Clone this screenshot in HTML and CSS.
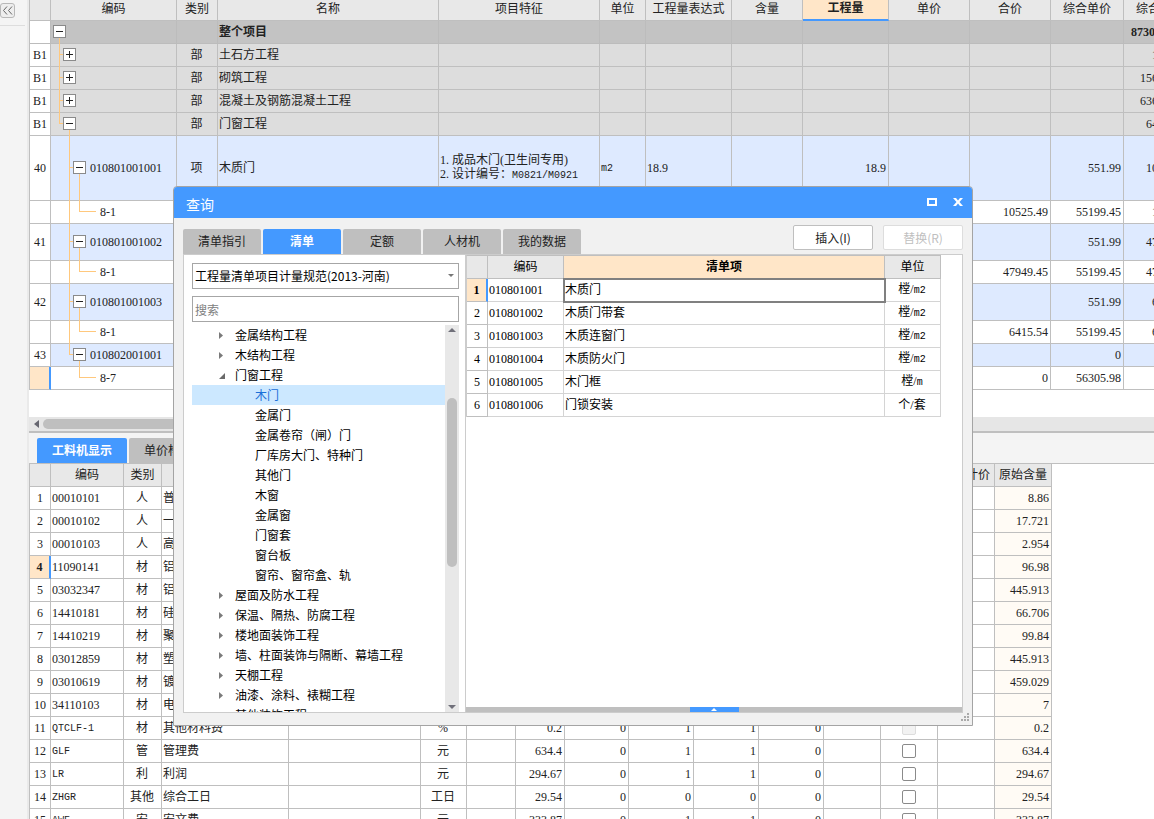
FILE: index.html
```html
<!DOCTYPE html>
<html lang="zh-CN">
<head>
<meta charset="utf-8">
<title>查询</title>
<link rel="stylesheet" href="styles.css">
</head>
<body>
<svg class="defs" aria-hidden="true">
  <defs>
    <g id="box"><rect x="-6" y="-6" width="12" height="12" fill="#fff" stroke="#8a8a8a"/><path d="M-3.5 0h7" stroke="#222"/></g>
    <g id="box-plus"><use href="#box"/><path d="M0 -3.5v7" stroke="#222"/></g>
    <g id="t-root"><path class="wire" d="M8.5 10v13"/><use href="#box" x="8.5" y="10.5"/></g>
    <g id="t-plus"><path class="wire" d="M8.5 0v23M8 10.5h6"/><use href="#box-plus" x="18.5" y="10.5"/></g>
    <g id="t-open"><path class="wire" d="M8.5 0v11M8 10.5h6M18.5 10v13"/><use href="#box" x="18.5" y="10.5"/></g>
    <g id="t-tall"><path class="wire" d="M18.5 0v65M18 31.5h8M28.5 31v34"/><use href="#box" x="28.5" y="31.5"/></g>
    <g id="t-mid"><path class="wire" d="M18.5 0v37M18 17.5h8M28.5 17v20"/><use href="#box" x="28.5" y="17.5"/></g>
    <g id="t-last"><path class="wire" d="M18.5 0v11M18 10.5h8M28.5 10v13"/><use href="#box" x="28.5" y="10.5"/></g>
    <g id="t-leaf"><path class="wire" d="M18.5 0v23M28.5 0v11M28 10.5h17"/></g>
    <g id="t-leaf-last"><path class="wire" d="M28.5 0v11M28 10.5h17"/></g>
    <path id="closed" d="M0 1l4 3.500l-4 3.500z" fill="#7a7a7a"/>
    <path id="opened" d="M6 0v6h-6z" fill="#6a6a6a"/>
  </defs>
</svg>

<aside class="rail">
  <button class="rail-toggle" aria-label="展开"><svg width="11" height="9"><path d="M5 0.500L1.500 4.500L5 8.500M10 0.500L6.500 4.500L10 8.500" fill="none" stroke="#666"/></svg></button>
</aside>

<main class="main">
  <section class="top-pane">
    <table class="grid bill">
      <colgroup><col class="w21"><col class="w126"><col class="w41"><col class="w221"><col class="w161"><col class="w46"><col class="w86"><col class="w71"><col class="w86"><col class="w81"><col class="w81"><col class="w73"><col class="w73"></colgroup>
      <thead><tr><th><th>编码<th>类别<th>名称<th>项目特征<th>单位<th>工程量表达式<th>含量<th class="current">工程量<th>单价<th>合价<th>综合单价<th>综合合价</tr></thead>
      <tbody>
        <tr class="root"><td><td class="node"><div><svg><use href="#t-root"/></svg></div><td><td>整个项目<td><td><td><td><td><td><td><td><td class="in-7">8730</tr>
        <tr class="part"><td>B1<td class="node"><div><svg><use href="#t-plus"/></svg></div><td class="c">部<td>土石方工程<td><td><td><td><td><td><td><td><td class="in-28">1</tr>
        <tr class="part"><td>B1<td class="node"><div><svg><use href="#t-plus"/></svg></div><td class="c">部<td>砌筑工程<td><td><td><td><td><td><td><td><td class="in-16">156</tr>
        <tr class="part"><td>B1<td class="node"><div><svg><use href="#t-plus"/></svg></div><td class="c">部<td>混凝土及钢筋混凝土工程<td><td><td><td><td><td><td><td><td class="in-16">636</tr>
        <tr class="part"><td>B1<td class="node"><div><svg><use href="#t-open"/></svg></div><td class="c">部<td>门窗工程<td><td><td><td><td><td><td><td><td class="in-22">64</tr>
        <tr class="item h65"><td>40<td class="node"><div><svg><use href="#t-tall"/></svg>010801001001</div><td class="c">项<td>木质门<td>1. 成品木门(卫生间专用)<br>2. 设计编号：<span class="mono">M0821/M0921</span><td><span class="mono">m2</span><td>18.9<td><td class="r">18.9<td><td><td class="r">551.99<td class="in-22">10</tr>
        <tr><td><td class="node leaf"><div><svg><use href="#t-leaf"/></svg>8-1</div><td><td><td><td><td><td><td><td><td class="r">10525.49<td class="r">55199.45<td class="in-28">1</tr>
        <tr class="item h37"><td>41<td class="node"><div><svg><use href="#t-mid"/></svg>010801001002</div><td><td><td><td><td><td><td><td><td><td class="r">551.99<td class="in-22">47</tr>
        <tr><td><td class="node leaf"><div><svg><use href="#t-leaf"/></svg>8-1</div><td><td><td><td><td><td><td><td><td class="r">47949.45<td class="r">55199.45<td class="in-22">47</tr>
        <tr class="item h37"><td>42<td class="node"><div><svg><use href="#t-mid"/></svg>010801001003</div><td><td><td><td><td><td><td><td><td><td class="r">551.99<td class="in-28">6</tr>
        <tr><td><td class="node leaf"><div><svg><use href="#t-leaf"/></svg>8-1</div><td><td><td><td><td><td><td><td><td class="r">6415.54<td class="r">55199.45<td class="in-28">6</tr>
        <tr class="item"><td>43<td class="node"><div><svg><use href="#t-last"/></svg>010802001001</div><td><td><td><td><td><td><td><td><td><td class="r">0<td></tr>
        <tr><td class="here"><td class="node leaf"><div><svg><use href="#t-leaf-last"/></svg>8-7</div><td><td><td><td><td><td><td><td><td class="r">0<td class="r">56305.98<td></tr>
      </tbody>
    </table>
  </section>
  <div class="hscroll"><svg width="5" height="8"><path d="M5 0v8L0 4z" fill="#666670"/></svg><span class="hthumb"></span></div>
  <nav class="lower-tabs"><button class="tab wide active">工料机显示</button><button class="tab">单价构成</button></nav>
  <section class="low-pane">
    <table class="grid res">
      <colgroup><col class="w21"><col class="w73"><col class="w38"><col class="w127"><col class="w132"><col class="w46"><col class="w49"><col class="w49"><col class="w64"><col class="w65"><col class="w65"><col class="w65"><col class="w57"><col class="w57"><col class="w57"><col class="w57"></colgroup>
      <thead><tr><th><th>编码<th>类别<th><th><th><th><th><th><th><th><th><th><th><th>是否计价<th>原始含量</tr></thead>
      <tbody>
        <tr><td>1<td>00010101<td class="c">人<td>普<td><td><td><td><td><td><td><td><td><td><td><td class="raw">8.86</tr>
        <tr><td>2<td>00010102<td class="c">人<td>一<td><td><td><td><td><td><td><td><td><td><td><td class="raw">17.721</tr>
        <tr><td>3<td>00010103<td class="c">人<td>高<td><td><td><td><td><td><td><td><td><td><td><td class="raw">2.954</tr>
        <tr><td class="here">4<td>11090141<td class="c">材<td>铝<td><td><td><td><td><td><td><td><td><td><td><td class="raw">96.98</tr>
        <tr><td>5<td>03032347<td class="c">材<td>铝<td><td><td><td><td><td><td><td><td><td><td><td class="raw">445.913</tr>
        <tr><td>6<td>14410181<td class="c">材<td>硅<td><td><td><td><td><td><td><td><td><td><td><td class="raw">66.706</tr>
        <tr><td>7<td>14410219<td class="c">材<td>聚<td><td><td><td><td><td><td><td><td><td><td><td class="raw">99.84</tr>
        <tr><td>8<td>03012859<td class="c">材<td>塑<td><td><td><td><td><td><td><td><td><td><td><td class="raw">445.913</tr>
        <tr><td>9<td>03010619<td class="c">材<td>镀<td><td><td><td><td><td><td><td><td><td><td><td class="raw">459.029</tr>
        <tr><td>10<td>34110103<td class="c">材<td>电<td><td><td><td><td><td><td><td><td><td><td><td class="raw">7</tr>
        <tr><td>11<td><span class="mono">QTCLF-1</span><td class="c">材<td>其他材料费<td><td class="c">%<td><td class="r">0.2<td class="r">0<td class="r">1<td class="r">1<td class="r">0<td><td class="c"><input type="checkbox" aria-label="第11行" disabled><td><td class="raw">0.2</tr>
        <tr><td>12<td><span class="mono">GLF</span><td class="c">管<td>管理费<td><td class="c">元<td><td class="r">634.4<td class="r">0<td class="r">1<td class="r">1<td class="r">0<td><td class="c"><input type="checkbox" aria-label="第12行"><td><td class="raw">634.4</tr>
        <tr><td>13<td><span class="mono">LR</span><td class="c">利<td>利润<td><td class="c">元<td><td class="r">294.67<td class="r">0<td class="r">1<td class="r">1<td class="r">0<td><td class="c"><input type="checkbox" aria-label="第13行"><td><td class="raw">294.67</tr>
        <tr><td>14<td><span class="mono">ZHGR</span><td class="c">其他<td>综合工日<td><td class="c">工日<td><td class="r">29.54<td class="r">0<td class="r">0<td class="r">0<td class="r">0<td><td class="c"><input type="checkbox" aria-label="第14行"><td><td class="raw">29.54</tr>
        <tr><td>15<td><span class="mono">AWF</span><td class="c">安<td>安文费<td><td class="c">元<td><td class="r">333.87<td class="r">0<td class="r">1<td class="r">1<td class="r">0<td><td class="c"><input type="checkbox" aria-label="第15行"><td><td class="raw">333.87</tr>
      </tbody>
    </table>
  </section>
</main>

<div class="dialog" role="dialog" aria-labelledby="dialog-title">
  <header class="titlebar">
    <h1 id="dialog-title">查询</h1>
    <button class="win-btn" aria-label="最大化"><svg width="10" height="8"><rect x="1" y="1" width="8" height="6" fill="none" stroke="#fff" stroke-width="2"/></svg></button>
    <button class="win-btn" aria-label="关闭"><svg width="10" height="8"><path d="M0 0h3l2 2.500L7 0h3L6.500 4L10 8H7L5 5.500L3 8H0L3.500 4z" fill="#fff"/></svg></button>
  </header>
  <div class="toolbar">
    <nav class="tabs"><button class="tab">清单指引</button><button class="tab active">清单</button><button class="tab">定额</button><button class="tab">人材机</button><button class="tab">我的数据</button></nav>
    <div class="actions"><button class="act">插入(I)</button><button class="act" disabled>替换(R)</button></div>
  </div>
  <div class="panel">
    <div class="finder">
      <div class="pick"><select aria-label="规范"><option>工程量清单项目计量规范(2013-河南)</option></select></div>
      <input class="search" type="text" placeholder="搜索" aria-label="搜索">
      <div class="tree-wrap">
        <ul class="tree">
          <li><svg><use href="#closed"/></svg>金属结构工程</li>
          <li><svg><use href="#closed"/></svg>木结构工程</li>
          <li><svg><use href="#opened" y="2"/></svg>门窗工程</li>
          <li class="sub selected">木门</li>
          <li class="sub">金属门</li>
          <li class="sub">金属卷帘（闸）门</li>
          <li class="sub">厂库房大门、特种门</li>
          <li class="sub">其他门</li>
          <li class="sub">木窗</li>
          <li class="sub">金属窗</li>
          <li class="sub">门窗套</li>
          <li class="sub">窗台板</li>
          <li class="sub">窗帘、窗帘盒、轨</li>
          <li><svg><use href="#closed"/></svg>屋面及防水工程</li>
          <li><svg><use href="#closed"/></svg>保温、隔热、防腐工程</li>
          <li><svg><use href="#closed"/></svg>楼地面装饰工程</li>
          <li><svg><use href="#closed"/></svg>墙、柱面装饰与隔断、幕墙工程</li>
          <li><svg><use href="#closed"/></svg>天棚工程</li>
          <li><svg><use href="#closed"/></svg>油漆、涂料、裱糊工程</li>
          <li>其他装饰工程</li>
        </ul>
        <div class="vscroll"><svg width="8" height="4"><path d="M0 4h8L4 0z" fill="#70707a"/></svg><div class="vtrack"><span class="vthumb"></span></div><svg width="8" height="4"><path d="M0 0h8L4 4z" fill="#70707a"/></svg></div>
      </div>
    </div>
    <div class="results">
      <table class="grid list">
        <colgroup><col class="w21"><col class="w76"><col class="w321"><col class="w56"></colgroup>
        <thead><tr><th><th>编码<th class="current">清单项<th>单位</tr></thead>
        <tbody>
          <tr><td class="here">1<td>010801001<td class="focus">木质门<td class="c">樘/<span class="mono">m2</span></tr>
          <tr><td>2<td>010801002<td>木质门带套<td class="c">樘/<span class="mono">m2</span></tr>
          <tr><td>3<td>010801003<td>木质连窗门<td class="c">樘/<span class="mono">m2</span></tr>
          <tr><td>4<td>010801004<td>木质防火门<td class="c">樘/<span class="mono">m2</span></tr>
          <tr><td>5<td>010801005<td>木门框<td class="c">樘/<span class="mono">m</span></tr>
          <tr><td>6<td>010801006<td>门锁安装<td class="c">个/套</tr>
        </tbody>
      </table>
      <div class="splitter"><button aria-label="展开详情"><svg width="6" height="3"><path d="M0 3h6L3 0z" fill="#fff"/></svg></button></div>
    </div>
  </div>
  <svg class="grip" width="8" height="8"><path d="M6 0h2v2h-2zM3 3h2v2h-2zM6 3h2v2h-2zM0 6h2v2h-2zM3 6h2v2h-2zM6 6h2v2h-2z" fill="#aaa"/></svg>
</div>
</body>
</html>
```
FILE: styles.css
```css
* { box-sizing: border-box; }

body {
  margin: 0;
  height: 100vh;
  display: flex;
  position: relative;
  overflow: hidden;
  background: #fff;
  color: #222;
  font: 12px/14px "Noto Sans CJK SC", sans-serif;
}

button, input, select { font: inherit; color: inherit; margin: 0; padding: 0; border: 0; }
.defs { position: absolute; width: 0; height: 0; }
.wire { fill: none; stroke: #ffc87d; }

/* left rail */
.rail { flex: none; width: 29px; padding-top: 3px; background: #f4f4f4; border-right: 2px solid #eaeaea; }
.rail::after { content: ""; display: block; width: 25px; margin-top: 7px; border-top: 1px solid #ddd; }
.rail-toggle { display: flex; align-items: center; justify-content: center; width: 15px; height: 15px; border: 1px solid #b8b8b8; border-radius: 3px; background: #eee; }

.main { flex: 1; min-width: 0; display: flex; flex-direction: column; }
.top-pane { flex: none; overflow: hidden; padding-bottom: 27px; }
.low-pane { flex: 1; overflow: hidden; min-height: 0; }

/* grids */
.grid { table-layout: fixed; width: 0; border-collapse: separate; border-spacing: 0; border-left: 1px solid #bfbfbf; font-family: "Liberation Serif", "Noto Sans CJK SC", serif; }
.grid tr { height: 23px; }
.grid th, .grid td { padding: 0 2px 1px 1px; border: solid #bfbfbf; border-width: 0 1px 1px 0; text-align: left; white-space: nowrap; }
.grid th { background: #e8e8e8; font-weight: 400; text-align: center; padding: 0; }
.grid td:first-child { text-align: center; padding: 0; background: #fff; font-weight: 400; }
.grid th.current { background: #ffe6c8; font-weight: 700; }
.bill th.current { border-bottom: 2px solid #4499ff; }
.bill thead tr { height: 21px; }
.bill thead th { padding-bottom: 3px; }
.grid td.c { text-align: center; }
.grid td.r, .grid td.raw { text-align: right; }
.grid td.raw { background: #fffbf5; }
.grid td.here:first-child { background: #ffe6c8; border-right: 2px solid #4499ff; font-weight: 700; }
.grid .h65 { height: 65px; }
.grid .h37 { height: 37px; }
.root td { background: #c3c3c3; border-color: #bcbcbc; font-weight: 700; }
.part td { background: #ddd; }
.item td { background: #deeaff; }
.grid td.in-7 { padding-left: 7px; }
.grid td.in-16 { padding-left: 16px; }
.grid td.in-22 { padding-left: 22px; }
.grid td.in-28 { padding-left: 28px; }
.mono { font: 10px/14px "Liberation Mono", monospace; }

.grid td.node { padding: 0; }
.node div { display: flex; align-items: center; height: 22px; }
.node svg { flex: none; align-self: flex-start; width: 39px; height: 23px; overflow: visible; }
.leaf svg { width: 49px; }
.h65 .node div { height: 64px; }
.h37 .node div { height: 36px; }

.w21 { width: 21px; } .w38 { width: 38px; } .w41 { width: 41px; } .w46 { width: 46px; }
.w49 { width: 49px; } .w56 { width: 56px; } .w57 { width: 57px; } .w64 { width: 64px; }
.w65 { width: 65px; } .w71 { width: 71px; } .w73 { width: 73px; } .w76 { width: 76px; }
.w81 { width: 81px; } .w86 { width: 86px; } .w126 { width: 126px; } .w127 { width: 127px; }
.w132 { width: 132px; } .w161 { width: 161px; } .w221 { width: 221px; } .w321 { width: 321px; }

input[type="checkbox"] { appearance: none; display: block; width: 14px; height: 14px; margin: 0 auto; border: 1px solid #8a8a8a; border-radius: 2px; background: #fff; }
input[type="checkbox"]:disabled { border-color: #ddd; background: #f2f2f2; }

.hscroll { flex: none; display: flex; align-items: center; height: 16px; padding-left: 5px; gap: 4px; background: #e6e6e6; border-bottom: 2px solid #bfbfbf; }
.hthumb { width: 640px; height: 10px; border-radius: 5px; background: #bfbfbf; }

/* tabs */
.lower-tabs { flex: none; display: flex; gap: 2px; height: 31px; padding: 5px 8px 0; background: #f4f4f4; border-bottom: 1px solid #bfbfbf; }
.tab { width: 78px; height: 25px; padding-bottom: 1px; border-radius: 2px 2px 0 0; background: #bfbfbf; color: #222; }
.tab.wide { width: 90px; }
.tab.active { background: #4499ff; color: #fff; font-weight: 700; }

/* dialog window */
.dialog { position: absolute; left: 173px; top: 186px; width: 800px; height: 540px; display: flex; flex-direction: column; border: 1px solid #a4a4a4; border-radius: 4px 4px 0 0; background: #f1f1f1; }
.titlebar { flex: none; display: flex; align-items: center; height: 31px; padding: 0 4px 1px 12px; gap: 6px; border-radius: 3px 3px 0 0; background: #4499ff; color: #fff; }
.titlebar h1 { flex: 1; margin: 0; padding-top: 3px; font-size: 14px; line-height: 20px; font-weight: 400; }
.win-btn { display: flex; align-items: center; justify-content: center; width: 20px; height: 20px; background: none; }
.toolbar { flex: none; display: flex; justify-content: space-between; height: 36px; padding: 7px 9px 0; }
.tabs { display: flex; gap: 2px; align-items: flex-end; }
.actions { display: flex; gap: 10px; }
.act { width: 80px; height: 25px; border: 1px solid #bfbfbf; border-radius: 2px; background: #fff; }
.act:disabled { border-color: #ddd; color: #bfbfbf; }
.panel { flex: 1; min-height: 0; display: flex; margin: 0 9px 12px; border: 1px solid #ccc; background: #fff; }

.finder { flex: none; display: flex; flex-direction: column; width: 282px; padding: 8px 6px 0 8px; border-right: 1px solid #ccc; color: #000; }
.pick { position: relative; height: 26px; }
.pick::after { content: ""; position: absolute; right: 5px; top: 11px; border: 3px solid transparent; border-top-color: #777; pointer-events: none; }
.pick select { appearance: none; width: 100%; height: 26px; padding: 0 2px; border: 1px solid #a6a6a6; border-radius: 0; background: #fff; }
.search { flex: none; height: 26px; margin-top: 7px; padding: 0 2px; border: 1px solid #a6a6a6; background: #fff; }
.search::placeholder { color: #808080; }
.tree-wrap { flex: 1; min-height: 0; display: flex; margin-top: 3px; }
.tree { flex: 1; margin: 0; padding: 0; list-style: none; overflow: hidden; line-height: 20px; }
.tree li { position: relative; height: 20px; padding-left: 43px; }
.tree li.sub { padding-left: 63px; }
.tree li.selected { background: #cce8ff; color: #1a6fd8; }
.tree svg { position: absolute; left: 27px; top: 6px; width: 7px; height: 9px; }
.vscroll { flex: none; display: flex; flex-direction: column; align-items: center; width: 14px; padding: 3px 0; background: #e8e8e8; }
.vtrack { flex: 1; padding-top: 66px; }
.vthumb { display: block; width: 10px; height: 169px; border-radius: 5px; background: #bfbfbf; }

.results { flex: 1; min-width: 0; display: flex; flex-direction: column; justify-content: space-between; }
.list { color: #000; border-left-color: #ccc; border-top: 1px solid #bfbfbf; }
.list td { border-color: #d4d4d4; }
.list td:first-child { border-color: #bfbfbf; }
.list td.focus { outline: 2px solid #808080; outline-offset: -1px; border-color: #808080; }
.list th.current { border-bottom-color: #4499ff; }
.splitter { display: flex; justify-content: center; height: 5px; background: #bfbfbf; }
.splitter button { display: flex; align-items: center; justify-content: center; width: 49px; height: 5px; background: #4499ff; }
.grip { position: absolute; right: 3px; bottom: 4px; }
```
